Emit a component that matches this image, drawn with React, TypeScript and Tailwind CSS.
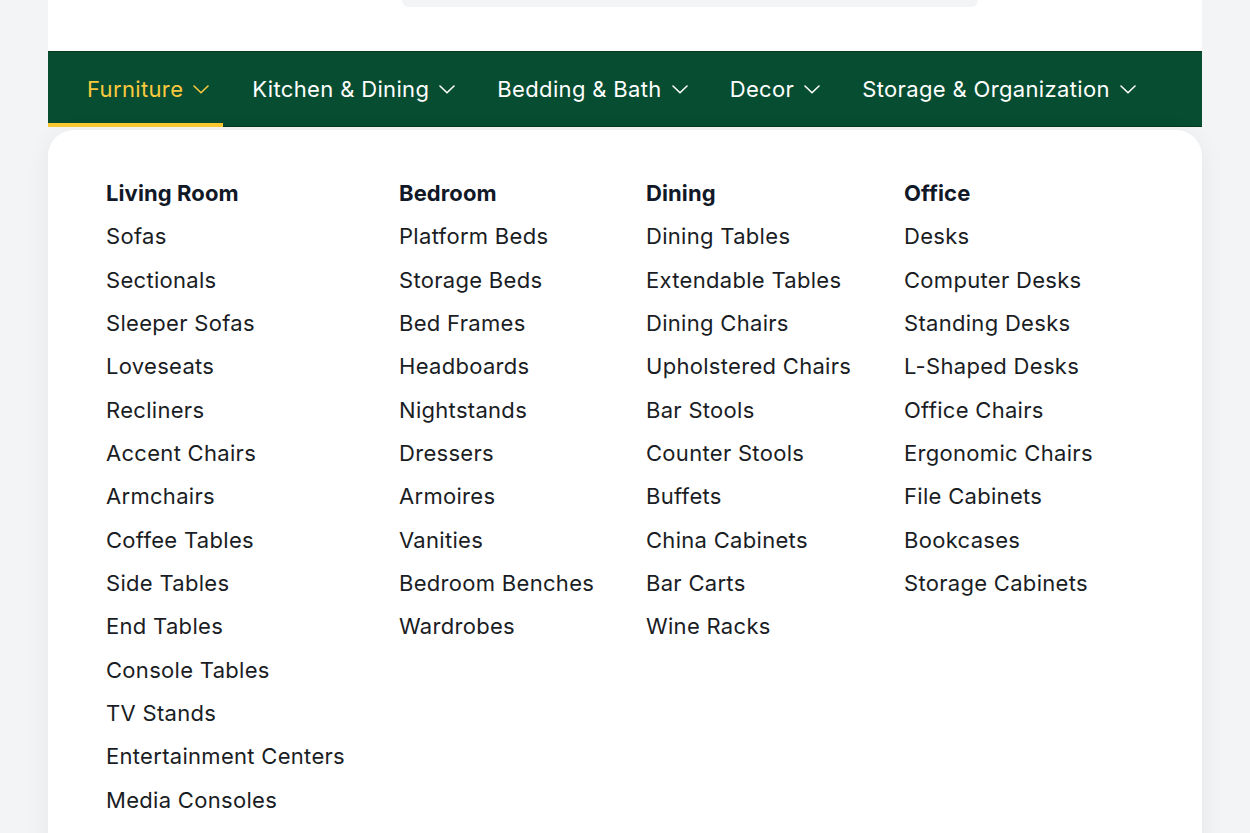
import React from "react";

const tabs = ["Furniture", "Kitchen & Dining", "Bedding & Bath", "Decor", "Storage & Organization"];

const columns: { title: string; items: string[] }[] = [
  {
    title: "Living Room",
    items: [
      "Sofas",
      "Sectionals",
      "Sleeper Sofas",
      "Loveseats",
      "Recliners",
      "Accent Chairs",
      "Armchairs",
      "Coffee Tables",
      "Side Tables",
      "End Tables",
      "Console Tables",
      "TV Stands",
      "Entertainment Centers",
      "Media Consoles",
      "Bookshelves",
    ],
  },
  {
    title: "Bedroom",
    items: [
      "Platform Beds",
      "Storage Beds",
      "Bed Frames",
      "Headboards",
      "Nightstands",
      "Dressers",
      "Armoires",
      "Vanities",
      "Bedroom Benches",
      "Wardrobes",
    ],
  },
  {
    title: "Dining",
    items: [
      "Dining Tables",
      "Extendable Tables",
      "Dining Chairs",
      "Upholstered Chairs",
      "Bar Stools",
      "Counter Stools",
      "Buffets",
      "China Cabinets",
      "Bar Carts",
      "Wine Racks",
    ],
  },
  {
    title: "Office",
    items: [
      "Desks",
      "Computer Desks",
      "Standing Desks",
      "L-Shaped Desks",
      "Office Chairs",
      "Ergonomic Chairs",
      "File Cabinets",
      "Bookcases",
      "Storage Cabinets",
    ],
  },
];

function Chevron({ color }: { color: string }) {
  return (
    <svg width="16" height="9" viewBox="0 0 16 9" fill="none" className="shrink-0">
      <path d="M1 1 L8 7.8 L15 1" stroke={color} strokeWidth="1.6" strokeLinecap="round" strokeLinejoin="round" />
    </svg>
  );
}

export default function App() {
  return (
    <div
      className="h-[833px] overflow-hidden bg-[#f3f4f6]"
      style={{ fontFamily: "Inter, 'Noto Sans', sans-serif" }}
    >
      <div className="mx-[48px] w-[1154px]">
        <div className="flex h-[51px] justify-start bg-white pl-[354px]">
          <div className="h-[7px] w-[576px] rounded-b-[12px] bg-[#f3f4f6]" />
        </div>
        <nav className="flex h-[76px] items-stretch border-y border-[#04391f] bg-[#074d31]">
          {tabs.map((t, i) => {
            const active = i === 0;
            return (
              <div
                key={t}
                className={`relative flex items-center gap-[10px] ${i === 0 ? "pl-[39px] pr-[14px]" : "pl-[29px] pr-[13px]"}`}
              >
                <span
                  className={`text-[22px] tracking-[0.35px] ${active ? "text-[#fbc93d]" : "text-white"}`}
                >
                  {t}
                </span>
                <Chevron color={active ? "#fbc93d" : "#ffffff"} />
                {active && <div className="absolute bottom-[-1px] left-0 right-0 h-[4px] bg-[#fbc731]" />}
              </div>
            );
          })}
        </nav>
        <div className="mt-[3px] rounded-t-[26px] bg-white pl-[58px] pt-[42px] pb-[40px] shadow-[0_4px_24px_rgba(0,0,0,0.06)]">
          <div className="grid grid-cols-[293px_247px_258px_1fr]">
            {columns.map((c) => (
              <div key={c.title}>
                <div className="text-[22px] font-bold leading-[43.33px] tracking-[0.1px] text-[#111827]">{c.title}</div>
                <ul>
                  {c.items.map((it) => (
                    <li key={it} className="text-[22px] leading-[43.33px] tracking-[0.3px] text-[#1a1d24]">
                      {it}
                    </li>
                  ))}
                </ul>
              </div>
            ))}
          </div>
        </div>
      </div>
    </div>
  );
}
